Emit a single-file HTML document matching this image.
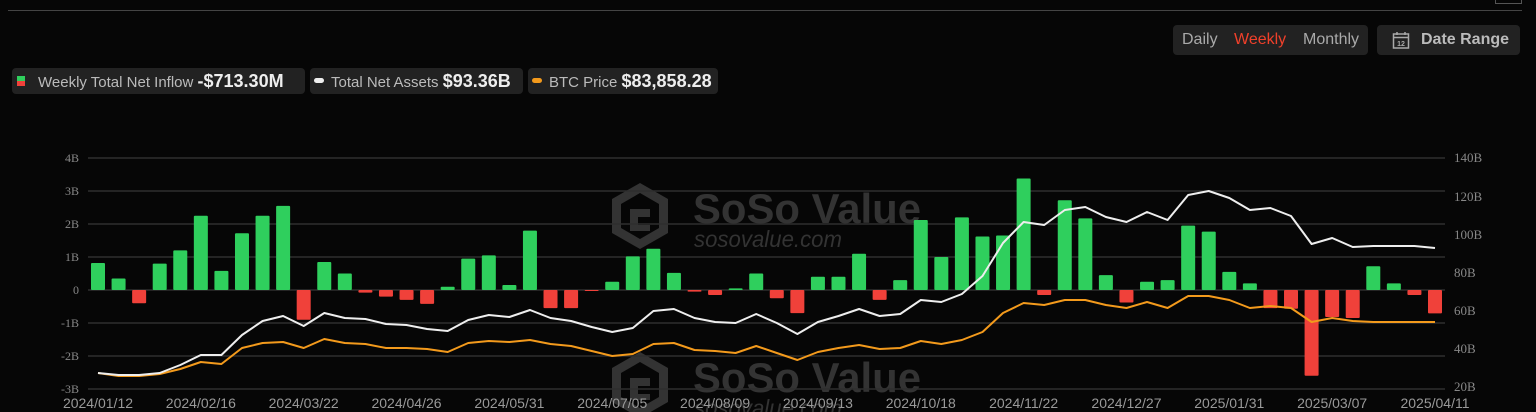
<!DOCTYPE html>
<html><head><meta charset="utf-8"><style>
html,body{margin:0;padding:0;background:#060606;width:1536px;height:412px;overflow:hidden;font-family:"Liberation Sans",sans-serif}
.box{position:absolute;background:#222;border-radius:4px;color:#bbb;font-size:15px;height:26px;line-height:26px;top:68px;white-space:nowrap}
.box b{color:#eee;font-size:18px}
</style></head><body>
<div style="position:absolute;left:8px;top:10px;width:1514px;height:1px;background:#444"></div>
<div style="position:absolute;left:1495px;top:0;width:25px;height:3px;border:1px solid #555;border-top:none"></div>
<div style="position:absolute;left:1173px;top:25px;width:195px;height:30px;background:#222;border-radius:4px;font-size:16px;line-height:30px;color:#aaa">
<span style="position:absolute;left:9px">Daily</span><span style="position:absolute;left:61px;color:#f0402a">Weekly</span><span style="position:absolute;left:130px">Monthly</span></div>
<div style="position:absolute;left:1377px;top:25px;width:143px;height:30px;background:#222;border-radius:4px;font-size:16px;line-height:30px;color:#bbb;font-weight:bold">
<svg style="position:absolute;left:15px;top:6px" width="18" height="18" viewBox="0 0 18 18"><rect x="1.5" y="3" width="15" height="14" fill="none" stroke="#aaa" stroke-width="1.5"/><line x1="1.5" y1="6.5" x2="16.5" y2="6.5" stroke="#aaa" stroke-width="1.5"/><line x1="5" y1="1" x2="5" y2="4" stroke="#aaa" stroke-width="1.5"/><line x1="13" y1="1" x2="13" y2="4" stroke="#aaa" stroke-width="1.5"/><text x="9" y="15" font-size="7" fill="#aaa" text-anchor="middle" font-family="Liberation Sans">12</text></svg>
<span style="position:absolute;left:44px">Date Range</span></div>
<div class="box" style="left:12px;width:293px"><span style="position:absolute;left:5px;top:8px;width:8px;height:5px;background:#2fcf5d"></span><span style="position:absolute;left:5px;top:13px;width:8px;height:5px;background:#f0413a"></span><span style="position:absolute;left:26px">Weekly Total Net Inflow <b>-$713.30M</b></span></div>
<div class="box" style="left:310px;width:213px"><span style="position:absolute;left:4px;top:10px;width:10px;height:5px;border-radius:3px;background:#eee"></span><span style="position:absolute;left:21px">Total Net Assets <b>$93.36B</b></span></div>
<div class="box" style="left:528px;width:190px"><span style="position:absolute;left:4px;top:10px;width:10px;height:5px;border-radius:3px;background:#f39a1c"></span><span style="position:absolute;left:21px">BTC Price <b>$83,858.28</b></span></div>
<svg id="c" style="position:absolute;left:0;top:0" width="1536" height="412"></svg>
<script>
var s='';
var gy=[158,191,224,257,290,323,356,389],ll=['4B','3B','2B','1B','0','-1B','-2B','-3B'];
var ry=[158,197,235,273,311,349,387],rl=['140B','120B','100B','80B','60B','40B','20B'];
function wm(y){return '<g fill="#383838" opacity="0.9"><path d="M640 '+(y)+' l28 16 v34 l-28 16 l-28 -16 v-34z M640 '+(y+10)+' l-19 11 v24 l19 11 l19 -11 v-24z" fill-rule="evenodd"/><path d="M630 '+(y+26)+'h20v8h-12v8h12v6h-20z"/><text x="693" y="'+(y+40)+'" font-size="42" font-weight="bold" font-family="Liberation Sans" textLength="228" lengthAdjust="spacingAndGlyphs">SoSo Value</text><text x="694" y="'+(y+64)+'" font-size="23" font-style="italic" font-family="Liberation Sans" textLength="148" lengthAdjust="spacingAndGlyphs">sosovalue.com</text></g>';}
s+=wm(183)+wm(352);
for(var i=0;i<8;i++){s+='<line x1="88" x2="1445" y1="'+gy[i]+'" y2="'+gy[i]+'" stroke="#2e2e2e" stroke-width="1.5"/><text x="79" y="'+(gy[i]+4)+'" font-size="12" fill="#888" text-anchor="end" font-family="Liberation Serif">'+ll[i]+'</text>';}
for(i=0;i<7;i++)s+='<text x="1454" y="'+(ry[i]+4)+'" font-size="13" fill="#888" font-family="Liberation Serif">'+rl[i]+'</text>';
var b=[0.82,0.35,-0.4,0.8,1.2,2.25,0.58,1.72,2.25,2.55,-0.9,0.85,0.5,-0.08,-0.2,-0.3,-0.42,0.1,0.95,1.05,0.15,1.8,-0.55,-0.55,-0.03,0.25,1.02,1.25,0.52,-0.05,-0.15,0.05,0.5,-0.25,-0.7,0.4,0.4,1.1,-0.3,0.3,2.12,1.0,2.2,1.62,1.65,3.38,-0.15,2.72,2.17,0.45,-0.38,0.25,0.3,1.95,1.77,0.55,0.2,-0.55,-0.57,-2.6,-0.82,-0.85,0.72,0.2,-0.15,-0.71];
var st=(1435-98)/65;
for(i=0;i<b.length;i++){var x=98+st*i,h=Math.abs(b[i])*33,y=b[i]>0?290-h:290;s+='<rect x="'+(x-7)+'" y="'+y+'" width="14" height="'+Math.max(h,1)+'" rx="1" fill="'+(b[i]>0?'#2fcf5d':'#f0413a')+'"/>';}
var w=[373,375,375,373,365,355,355,335,321,316,326,313,318,319,324,325,329,331,320,315,317,310,318,321,327,332,328,311,309,318,322,323,314,323,334,322,316,309,316,314,300,302,294,276,243,222,225,210,207,217,222,212,220,195,191,198,210,208,216,244,238,247,246,246,246,248];
var o=[373,376,376,374,369,362,364,348,343,342,348,339,343,344,348,348,349,352,343,341,342,340,344,346,351,356,354,344,343,350,351,353,346,353,360,352,348,345,349,348,341,344,340,332,313,303,305,300,300,305,308,302,308,296,296,300,308,306,308,322,318,321,322,322,322,322];
function pl(a,c){var p=[];for(var i=0;i<a.length;i++)p.push((98+st*i).toFixed(1)+','+a[i]);return '<polyline points="'+p.join(' ')+'" fill="none" stroke="'+c+'" stroke-width="2" stroke-linejoin="round"/>';}
s+=pl(o,'#f39a1c')+pl(w,'#eeeeee');
var lb=['2024/01/12','2024/02/16','2024/03/22','2024/04/26','2024/05/31','2024/07/05','2024/08/09','2024/09/13','2024/10/18','2024/11/22','2024/12/27','2025/01/31','2025/03/07','2025/04/11'];
for(i=0;i<lb.length;i++)s+='<text x="'+(98+st*5*i)+'" y="408" font-size="14" fill="#999" text-anchor="middle" font-family="Liberation Sans">'+lb[i]+'</text>';
document.getElementById('c').innerHTML=s;
</script>
</body></html>
